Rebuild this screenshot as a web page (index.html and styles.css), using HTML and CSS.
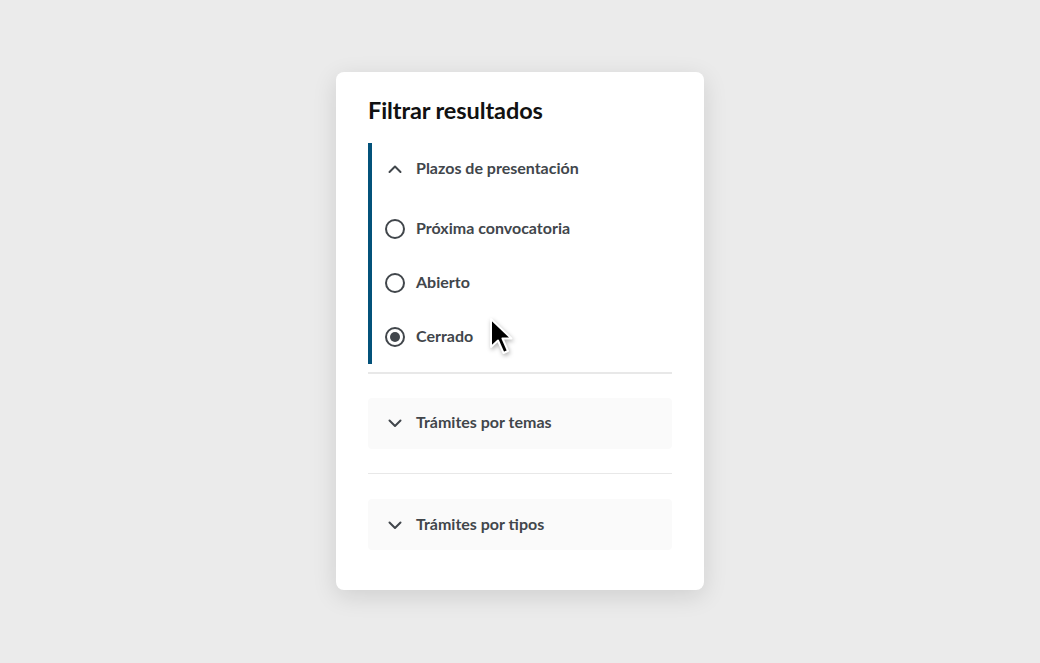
FILE: index.html
```html
<!DOCTYPE html>
<html lang="es">
<head>
<meta charset="utf-8">
<link rel="stylesheet" href="styles.css">
</head>
<body>
<div class="page">
  <div class="card">
    <h2 class="title">Filtrar resultados</h2>
    <div class="section open">
      <div class="acc-head">
        <svg class="chev" viewBox="0 0 14 14" width="14" height="14"><path d="M1.5 10 L7 4.5 L12.5 10" fill="none" stroke="#41464b" stroke-width="2" stroke-linecap="round" stroke-linejoin="round"/></svg>
        <span class="lbl">Plazos de presentación</span>
      </div>
      <div class="options">
        <label class="opt"><span class="radio"></span><span class="lbl">Próxima convocatoria</span></label>
        <label class="opt"><span class="radio"></span><span class="lbl">Abierto</span></label>
        <label class="opt"><span class="radio checked"></span><span class="lbl">Cerrado</span>
          <svg class="cursor" viewBox="0 0 26 40" width="26" height="40"><path d="M2 2 L2 30 L9 23.5 L14.5 36 L19 34 L13.5 21.5 L22.5 21.5 Z" fill="#000" stroke="#fff" stroke-width="2" stroke-linejoin="round"/></svg>
        </label>
      </div>
    </div>
    <div class="divider"></div>
    <div class="acc-closed">
      <svg class="chev" viewBox="0 0 14 14" width="14" height="14"><path d="M1.5 4.5 L7 10 L12.5 4.5" fill="none" stroke="#41464b" stroke-width="2" stroke-linecap="round" stroke-linejoin="round"/></svg>
      <span class="lbl lbl-up">Trámites por temas</span>
    </div>
    <div class="divider"></div>
    <div class="acc-closed">
      <svg class="chev" viewBox="0 0 14 14" width="14" height="14"><path d="M1.5 4.5 L7 10 L12.5 4.5" fill="none" stroke="#41464b" stroke-width="2" stroke-linecap="round" stroke-linejoin="round"/></svg>
      <span class="lbl">Trámites por tipos</span>
    </div>
  </div>
</div>
</body>
</html>
```
FILE: styles.css
```css
html, body {
  margin: 0;
  padding: 0;
  background: #ebebeb;
  font-family: Lato, "Noto Sans", sans-serif;
}
.page {
  width: 1040px;
  height: 663px;
  display: flex;
  justify-content: center;
  align-items: flex-start;
  padding-top: 72px;
  box-sizing: border-box;
}
.card {
  width: 368px;
  height: 518px;
  box-sizing: border-box;
  background: #fff;
  border-radius: 8px;
  box-shadow: 0 6px 24px rgba(0,0,0,0.12);
  padding: 24px 32px 40px 32px;
  display: flex;
  flex-direction: column;
}
.title {
  margin: 0 0 19px 0;
  font-size: 23.5px;
  line-height: 28px;
  font-weight: 700;
  color: #111;
  letter-spacing: -0.1px;
}
.section {
  border-left: 4px solid #03527a;
  display: flex;
  flex-direction: column;
}
.acc-head {
  height: 52px;
  display: flex;
  align-items: center;
  padding-left: 16px;
  gap: 14px;
  font-size: 16px;
  font-weight: 700;
  color: #41464b;
}
.lbl {
  line-height: 20px;
  margin-bottom: 2px;
}
.lbl-up {
  margin-bottom: 3px;
}
.options {
  padding-top: 7px;
  display: flex;
  flex-direction: column;
}
.opt {
  height: 54px;
  display: flex;
  align-items: center;
  padding-left: 13px;
  gap: 11px;
  font-size: 16px;
  font-weight: 700;
  color: #41464b;
  position: relative;
}
.radio {
  width: 20px;
  height: 20px;
  box-sizing: border-box;
  border: 2px solid #41464b;
  border-radius: 50%;
  display: flex;
  align-items: center;
  justify-content: center;
  flex: none;
}
.radio.checked::after {
  content: "";
  width: 10px;
  height: 10px;
  border-radius: 50%;
  background: #41464b;
}
.cursor {
  position: absolute;
  left: 117px;
  top: 7px;
  filter: drop-shadow(1px 2px 2px rgba(0,0,0,0.3));
}
.divider {
  height: 2px;
  background: #e8e8e8;
  margin-top: 8px;
  margin-bottom: 24px;
}
.acc-closed {
  height: 51px;
  background: #fafafa;
  border-radius: 4px;
  display: flex;
  align-items: center;
  padding-left: 20px;
  gap: 14px;
  font-size: 16px;
  font-weight: 700;
  color: #41464b;
}
.acc-closed + .divider {
  margin-top: 24px;
  margin-bottom: 25px;
}
```
